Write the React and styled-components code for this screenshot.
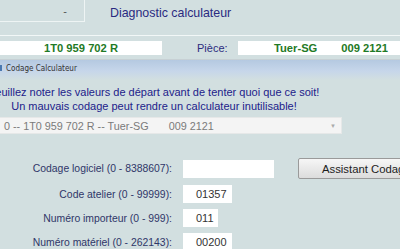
import React from 'react'
import styled, { createGlobalStyle } from 'styled-components'

const GlobalStyle = createGlobalStyle`
body {
  margin: 0;
  background: #d2dfe0;
  font-family: 'Liberation Sans', Arial, sans-serif;
  overflow: hidden;
}
`

const Page = styled.div`
width: 400px;
height: 249px;
overflow: hidden;
background: #d2dfe0;
`

const Header = styled.header`
height: 35px;
display: flex;
align-items: flex-start;
border-bottom: 1px solid #f2f7f7;
`

const SidePanel = styled.div`
width: 85px;
height: 22px;
display: flex;
align-items: center;
justify-content: flex-end;
padding-right: 17px;
box-sizing: border-box;
border-right: 1px solid #eef4f4;
border-bottom: 1px solid #eef4f4;
color: #555;
font-size: 11px;
`

const AppTitle = styled.h1`
margin: 0 0 0 25px;
font-size: 12.4px;
font-weight: normal;
line-height: 26px;
color: #2a2a80;
`

const PartRow = styled.div`
height: 23px;
display: flex;
align-items: center;
`

const PartBox = styled.div`
width: ${p => p.$w}px;
height: 14px;
background: #fff;
display: flex;
align-items: center;
justify-content: ${p => p.$justify || 'center'};
gap: ${p => p.$gap || 0}px;
padding-left: ${p => p.$pl || 0}px;
box-sizing: border-box;
color: #1f7a26;
font-weight: bold;
font-size: 11.2px;
margin-left: ${p => (p.$push ? 'auto' : '0')};
`

const PartLabel = styled.span`
margin-left: 35px;
font-size: 11px;
color: #2c2c7e;
`

const TitleBar = styled.div`
height: 21px;
display: flex;
align-items: center;
gap: 4px;
padding-bottom: 4px;
box-sizing: border-box;
background: linear-gradient(#b5c9e1, #c6d6ea 55%, #d2dfe0);
border-top: 1px solid #c7d0d4;
font-family: 'Liberation Sans Narrow', 'DejaVu Sans Condensed', 'Liberation Sans', sans-serif;
font-size: 8px;
color: #333;
`

const WinIcon = styled.span`
width: 2px;
height: 6px;
background: #4a78b0;
`

const Content = styled.div`
padding-top: 5px;
`

const Messages = styled.div`
margin-left: -20px;
width: 348px;
text-align: center;
white-space: nowrap;
font-size: 11px;
line-height: 14px;
color: #21218a;
`

const Select = styled.div`
margin: 4px 0 0 -2px;
width: 344px;
height: 17px;
box-sizing: border-box;
background: #f4f4f4;
border: 1px solid #e6e8e8;
display: flex;
align-items: center;
padding: 0 5px;
font-size: 10.8px;
color: #7a7a7a;
white-space: nowrap;
`

const SelectText = styled.span`
flex: 1;
`

const Gap = styled.span`
display: inline-block;
width: ${p => p.$w}px;
`

const Arrow = styled.span`
font-size: 6px;
color: #aaa;
`

const Form = styled.div`
margin-top: 24px;
display: grid;
grid-template-columns: 172px auto 1fr;
column-gap: 11px;
row-gap: 6px;
align-items: center;
`

const Label = styled.label`
text-align: right;
font-size: 10.4px;
color: #2f3668;
white-space: nowrap;
`

const Field = styled.div`
width: ${p => p.$w}px;
height: 18px;
background: #fff;
box-sizing: border-box;
padding-left: 13px;
display: flex;
align-items: center;
font-size: 11px;
color: #333;
`

const Button = styled.button`
margin-left: 13px;
width: 120px;
height: 21px;
padding: 0 0 0 23px;
text-align: left;
border: 1px solid #9a9a9a;
border-radius: 2px;
background: linear-gradient(#f6f6f6, #e9e9e9 50%, #dcdcdc);
font-family: 'Liberation Sans', Arial, sans-serif;
font-size: 11.3px;
color: #1c1c1c;
white-space: nowrap;
`

const fields = [
  { label: 'Codage logiciel (0 - 8388607):', value: '', w: 91 },
  { label: 'Code atelier (0 - 99999):', value: '01357', w: 49 },
  { label: 'Numéro importeur (0 - 999):', value: '011', w: 35 },
  { label: 'Numéro matériel (0 - 262143):', value: '00200', w: 49 },
]

const App = () => {
  return (
    <Page>
      <GlobalStyle />
      <Header>
        <SidePanel>-</SidePanel>
        <AppTitle>Diagnostic calculateur</AppTitle>
      </Header>
      <PartRow>
        <PartBox $w={162}>1T0 959 702 R</PartBox>
        <PartLabel>Pièce:</PartLabel>
        <PartBox $w={162} $push $justify="flex-start" $pl={36} $gap={24}>
          <span>Tuer-SG</span>
          <span>009 2121</span>
        </PartBox>
      </PartRow>
      <TitleBar>
        <WinIcon />
        Codage Calculateur
      </TitleBar>
      <Content>
        <Messages>
          <div>Veuillez noter les valeurs de départ avant de tenter quoi que ce soit!</div>
          <div>Un mauvais codage peut rendre un calculateur inutilisable!</div>
        </Messages>
        <Select>
          <SelectText>
            0 -- 1T0 959 702 R -- Tuer-SG<Gap $w={20} />009 2121
          </SelectText>
          <Arrow>▼</Arrow>
        </Select>
        <Form>
          {fields.map((f, i) => (
            <React.Fragment key={i}>
              <Label>{f.label}</Label>
              <Field $w={f.w}>{f.value}</Field>
              {i === 0 ? <Button>Assistant Codage</Button> : <span />}
            </React.Fragment>
          ))}
        </Form>
      </Content>
    </Page>
  )
}

export default App
